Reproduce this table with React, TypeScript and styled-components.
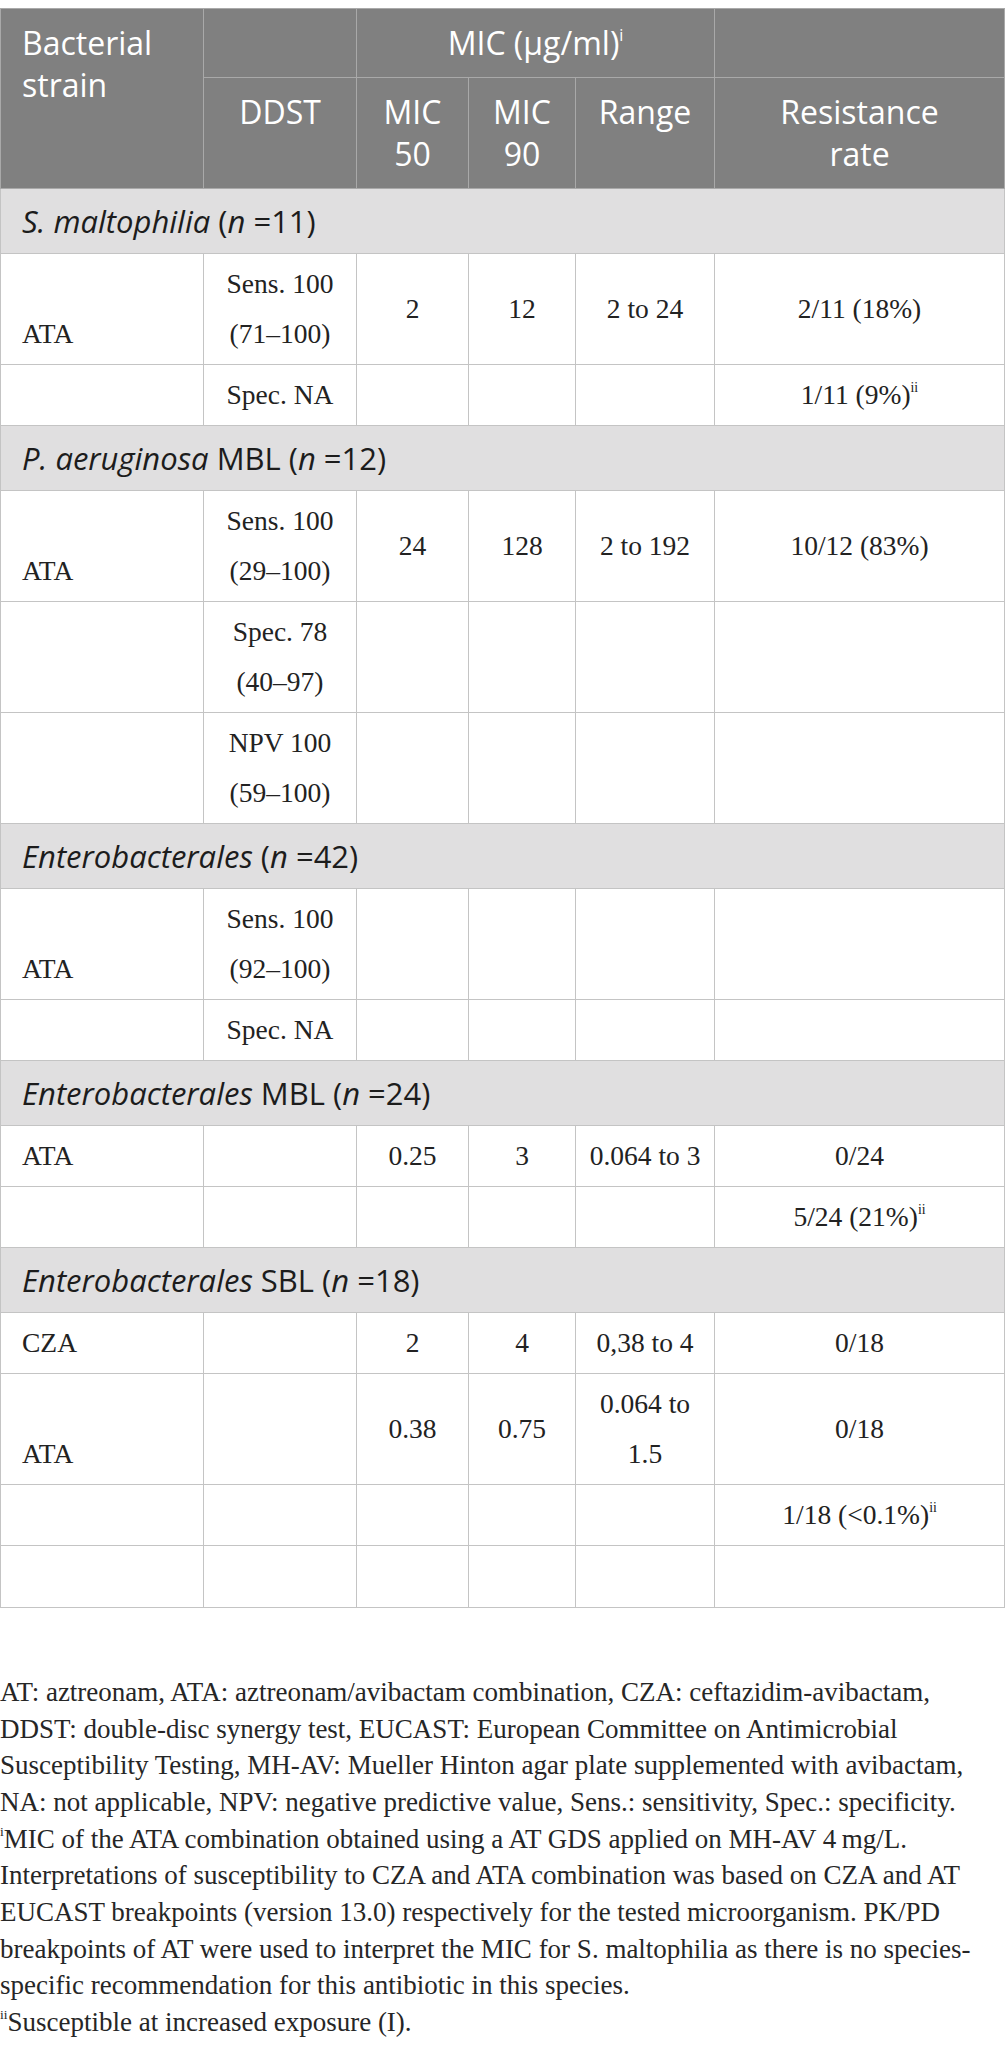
import React from "react";
import styled, { createGlobalStyle } from "styled-components";

type Cell = React.ReactNode | React.ReactNode[];

interface Group {
  label: React.ReactNode;
  rows: Cell[][];
}

const GlobalStyle = createGlobalStyle`
  html, body {
    margin: 0;
    padding: 0;
    background: #ffffff;
  }
  body {
    font-family: "Liberation Serif", "Times New Roman", serif;
    color: #222222;
  }
`;

const Page = styled.div`
  width: 1005px;
  padding-top: 8px;
`;

const Table = styled.table`
  width: 1004px;
  border-collapse: collapse;
  table-layout: fixed;
  border: 1px solid #c4c4c4;
`;

const HeadCell = styled.th<{ $left?: boolean }>`
  background: #808080;
  color: #ffffff;
  font-family: "Open Sans", "Noto Sans", sans-serif;
  font-weight: 400;
  font-size: 32px;
  line-height: 42px;
  padding: 13px ${({ $left }) => ($left ? "8px 13px 21px" : "4px")};
  text-align: ${({ $left }) => ($left ? "left" : "center")};
  vertical-align: top;
  border: 1px solid #a9a9a9;
`;

const GroupCell = styled.td`
  background: #e0dfe0;
  color: #1c1c1c;
  font-family: "Open Sans", "Noto Sans", sans-serif;
  font-size: 31px;
  line-height: 42px;
  padding: 11px 21px;
  text-align: left;
  border: 1px solid #c4c4c4;

  em {
    font-style: italic;
  }
`;

const BodyRow = styled.tr<{ $blank?: boolean }>`
  height: ${({ $blank }) => ($blank ? "62px" : "auto")};
`;

const BodyCell = styled.td<{ $first?: boolean }>`
  font-size: 27.5px;
  line-height: 50px;
  padding: ${({ $first }) => ($first ? "5px 6px 5px 21px" : "5px 4px")};
  text-align: ${({ $first }) => ($first ? "left" : "center")};
  vertical-align: ${({ $first }) => ($first ? "bottom" : "middle")};
  white-space: nowrap;
  color: #222222;
  border: 1px solid #c4c4c4;
`;

const Sup = styled.sup`
  font-size: 0.5em;
  line-height: 0;
  vertical-align: 0.9em;
`;

const Notes = styled.div`
  margin-top: 66px;
  font-size: 27px;
  line-height: 36.67px;
  color: #262626;
  white-space: nowrap;
`;

const Note = styled.p`
  margin: 0;
`;

const cols = [203, 153, 112, 107, 139, 290];

const groups: Group[] = [
  {
    label: (
      <>
        <em>S. maltophilia</em> (<em>n</em> =11)
      </>
    ),
    rows: [
      ["ATA", ["Sens. 100", "(71–100)"], "2", "12", "2 to 24", "2/11 (18%)"],
      ["", "Spec. NA", "", "", "", <>1/11 (9%)<Sup>ii</Sup></>],
    ],
  },
  {
    label: (
      <>
        <em>P. aeruginosa</em> MBL (<em>n</em> =12)
      </>
    ),
    rows: [
      ["ATA", ["Sens. 100", "(29–100)"], "24", "128", "2 to 192", "10/12 (83%)"],
      ["", ["Spec. 78", "(40–97)"], "", "", "", ""],
      ["", ["NPV 100", "(59–100)"], "", "", "", ""],
    ],
  },
  {
    label: (
      <>
        <em>Enterobacterales</em> (<em>n</em> =42)
      </>
    ),
    rows: [
      ["ATA", ["Sens. 100", "(92–100)"], "", "", "", ""],
      ["", "Spec. NA", "", "", "", ""],
    ],
  },
  {
    label: (
      <>
        <em>Enterobacterales</em> MBL (<em>n</em> =24)
      </>
    ),
    rows: [
      ["ATA", "", "0.25", "3", "0.064 to 3", "0/24"],
      ["", "", "", "", "", <>5/24 (21%)<Sup>ii</Sup></>],
    ],
  },
  {
    label: (
      <>
        <em>Enterobacterales</em> SBL (<em>n</em> =18)
      </>
    ),
    rows: [
      ["CZA", "", "2", "4", "0,38 to 4", "0/18"],
      ["ATA", "", "0.38", "0.75", ["0.064 to", "1.5"], "0/18"],
      ["", "", "", "", "", <>1/18 (&lt;0.1%)<Sup>ii</Sup></>],
      ["", "", "", "", "", ""],
    ],
  },
];

const renderCell = (value: Cell) => {
  if (Array.isArray(value)) {
    return value.map((line, i) => (
      <React.Fragment key={i}>
        {i > 0 && <br />}
        {line}
      </React.Fragment>
    ));
  }
  return value === "" ? "\u00a0" : value;
};

const isBlank = (row: Cell[]) => row.every((v) => v === "");

export default function App() {
  return (
    <Page>
      <GlobalStyle />
      <Table>
        <colgroup>
          {cols.map((w, i) => (
            <col key={i} style={{ width: w }} />
          ))}
        </colgroup>
        <thead>
          <tr>
            <HeadCell $left rowSpan={2}>
              Bacterial
              <br />
              strain
            </HeadCell>
            <HeadCell />
            <HeadCell colSpan={3}>
              MIC (µg/ml)<Sup>i</Sup>
            </HeadCell>
            <HeadCell />
          </tr>
          <tr>
            <HeadCell>DDST</HeadCell>
            <HeadCell>
              MIC
              <br />
              50
            </HeadCell>
            <HeadCell>
              MIC
              <br />
              90
            </HeadCell>
            <HeadCell>Range</HeadCell>
            <HeadCell>
              Resistance
              <br />
              rate
            </HeadCell>
          </tr>
        </thead>
        <tbody>
          {groups.map((group, gi) => (
            <React.Fragment key={gi}>
              <tr>
                <GroupCell colSpan={6}>{group.label}</GroupCell>
              </tr>
              {group.rows.map((row, ri) => (
                <BodyRow key={ri} $blank={isBlank(row)}>
                  {row.map((value, ci) => (
                    <BodyCell key={ci} $first={ci === 0}>
                      {renderCell(value)}
                    </BodyCell>
                  ))}
                </BodyRow>
              ))}
            </React.Fragment>
          ))}
        </tbody>
      </Table>
      <Notes>
        <Note>
          AT: aztreonam, ATA: aztreonam/avibactam combination, CZA: ceftazidim-avibactam,
          <br />
          DDST: double-disc synergy test, EUCAST: European Committee on Antimicrobial
          <br />
          Susceptibility Testing, MH-AV: Mueller Hinton agar plate supplemented with avibactam,
          <br />
          NA: not applicable, NPV: negative predictive value, Sens.: sensitivity, Spec.: specificity.
        </Note>
        <Note>
          <Sup>i</Sup>MIC of the ATA combination obtained using a AT GDS applied on MH-AV 4{"\u2009"}mg/L.
          <br />
          Interpretations of susceptibility to CZA and ATA combination was based on CZA and AT
          <br />
          EUCAST breakpoints (version 13.0) respectively for the tested microorganism. PK/PD
          <br />
          breakpoints of AT were used to interpret the MIC for S. maltophilia as there is no species-
          <br />
          specific recommendation for this antibiotic in this species.
        </Note>
        <Note>
          <Sup>ii</Sup>Susceptible at increased exposure (I).
        </Note>
      </Notes>
    </Page>
  );
}
